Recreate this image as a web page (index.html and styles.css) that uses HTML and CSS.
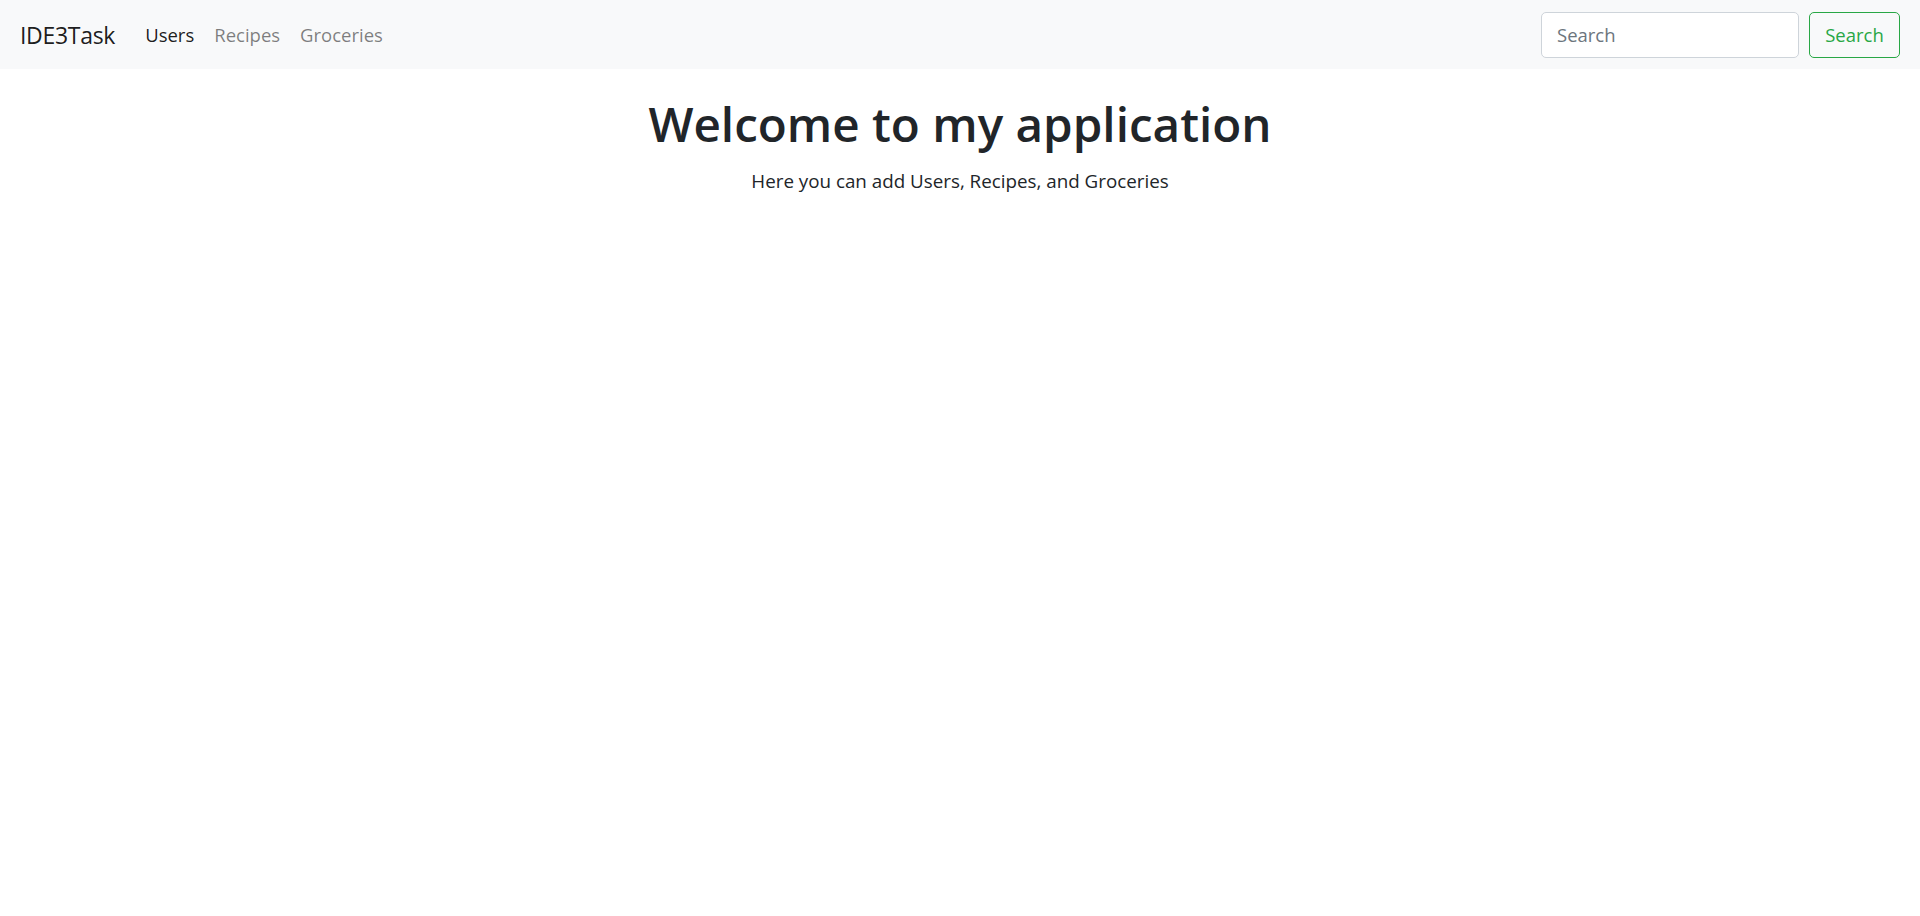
FILE: index.html
```html
<!DOCTYPE html>
<html lang="en">
<head>
<meta charset="utf-8">
<title>IDE3Task</title>
<link rel="stylesheet" href="styles.css">
</head>
<body>
<nav class="navbar">
  <a class="brand" href="#">IDE3Task</a>
  <ul class="nav-links">
    <li><a class="nav-link active" href="#">Users</a></li>
    <li><a class="nav-link" href="#">Recipes</a></li>
    <li><a class="nav-link" href="#">Groceries</a></li>
  </ul>
  <form class="search-form">
    <input class="search-input" type="search" placeholder="Search" aria-label="Search">
    <button class="search-btn" type="button">Search</button>
  </form>
</nav>
<main class="hero">
  <h1 class="title">Welcome to my application</h1>
  <p class="subtitle">Here you can add Users, Recipes, and Groceries</p>
</main>
</body>
</html>
```

FILE: styles.css
```css
* { box-sizing: border-box; }
html, body { margin: 0; padding: 0; background: #fff; }
body {
  font-family: "Open Sans", "Noto Sans", sans-serif;
  color: #212529;
}
.navbar {
  height: 69px;
  background: #f8f9fa;
  display: flex;
  align-items: center;
  padding: 0 20px;
}
.brand {
  font-size: 23px;
  color: rgba(0,0,0,.9);
  text-decoration: none;
  margin-right: 20px;
  letter-spacing: -0.3px;
}
.nav-links {
  list-style: none;
  margin: 0;
  padding: 0;
  display: flex;
  flex: 1;
}
.nav-link {
  display: block;
  padding: 0 10px;
  font-size: 18.5px;
  color: rgba(0,0,0,.5);
  text-decoration: none;
}
.nav-link.active { color: rgba(0,0,0,.9); }
.search-form {
  display: flex;
  align-items: center;
  gap: 10px;
}
.search-input {
  width: 258px;
  height: 46px;
  border: 1px solid #ced4da;
  border-radius: 5px;
  padding: 0 15px;
  font-family: inherit;
  font-size: 18.5px;
  color: #495057;
  background: #fff;
  outline: none;
}
.search-input::placeholder { color: #6c757d; }
.search-btn {
  height: 46px;
  width: 91px;
  border: 1px solid #28a745;
  border-radius: 5px;
  background: transparent;
  color: #28a745;
  font-family: inherit;
  font-size: 18.5px;
  padding: 0;
}
.hero {
  text-align: center;
  padding-top: 25px;
}
.title {
  margin: 0 0 12px;
  font-size: 47.6px;
  font-weight: 600;
  line-height: 60px;
  color: #212529;
}
.subtitle {
  margin: 0;
  font-size: 18.8px;
  line-height: 30px;
  color: #212529;
}
```
